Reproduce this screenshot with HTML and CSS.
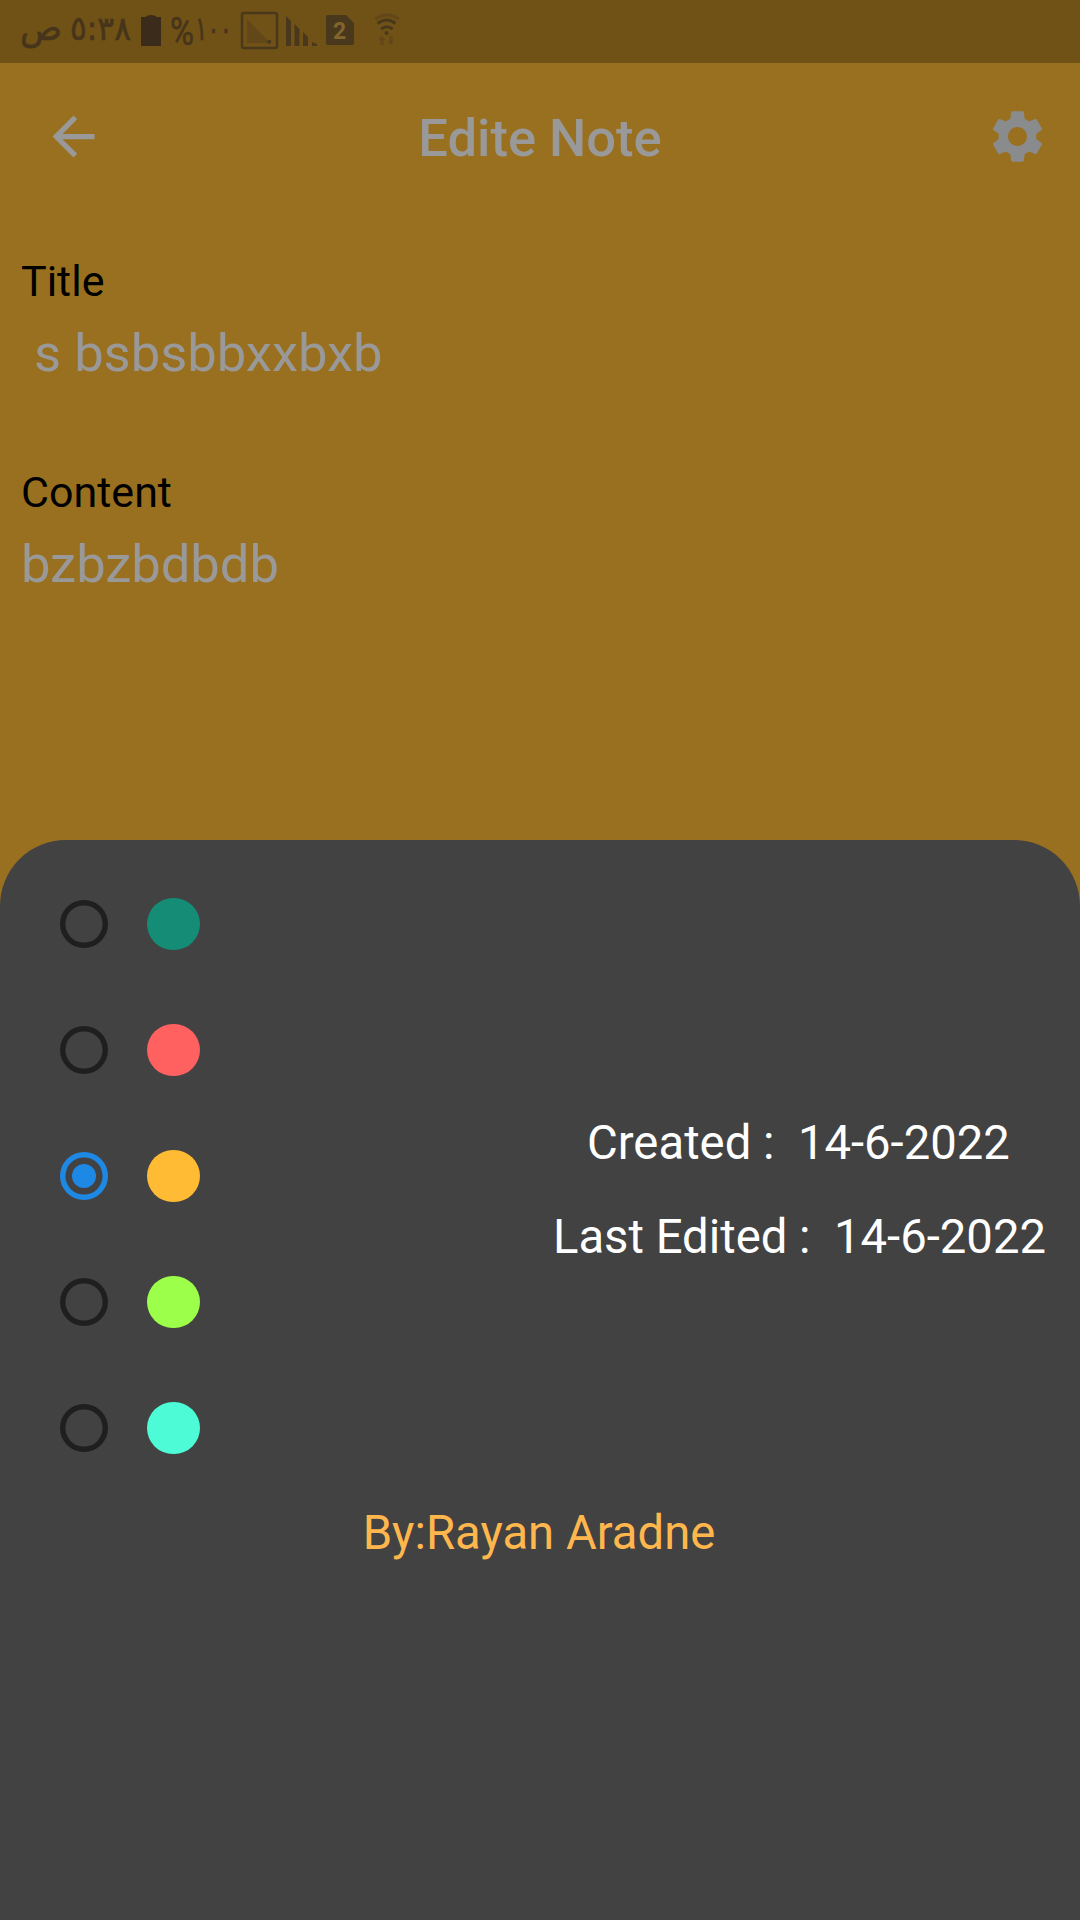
FILE: index.html
```html
<!DOCTYPE html>
<html lang="en">
<head>
<meta charset="utf-8">
<title>Edite Note</title>
<link rel="stylesheet" href="styles.css">
</head>
<body>
<div class="screen">
  <header class="status">
    <svg class="status-icons" viewBox="0 0 420 63" width="420" height="63">
      <g class="status-text">
        <text x="20" y="40" font-size="35" textLength="42" lengthAdjust="spacingAndGlyphs">ص</text>
        <text x="70" y="40" font-size="33" textLength="61" lengthAdjust="spacingAndGlyphs">٥:٣٨</text>
        <text class="percent" x="170" y="45" font-size="38" textLength="24" lengthAdjust="spacingAndGlyphs">%</text>
        <text x="195" y="40" font-size="33" textLength="37" lengthAdjust="spacingAndGlyphs">١٠٠</text>
      </g>
      <path class="battery" d="M141 17h4q6-4 12 0h4v29h-20z"/>
      <rect class="frame" x="242" y="13" width="35" height="35" rx="2"/>
      <path class="faint" d="M247 19l23 24h-23z"/>
      <rect class="ink" x="267.500" y="40" width="3.500" height="3.500"/>
      <path class="ink" d="M286 16l5 5v25h-5zM294.500 24l5 5v17h-5zM303 32l5 5v9h-5zM312 42l5 2v2h-5z"/>
      <path class="ink" d="M328 15h18l8 8v20q0 2-2 2h-24q-2 0-2-2v-26q0-2 2-2z"/>
      <text class="sim" x="333" y="39" font-size="23">2</text>
      <path class="wave faint-wave" d="M375 19q12-8 24 0"/>
      <path class="wave" d="M377.500 23.500q9.500-7 18 0M381 29q6-4.500 11.500 0"/>
      <circle class="ink" cx="386.500" cy="33" r="2"/>
      <path class="faint" d="M382 36l3.500 4h-2v5h-3v-5h-2zM391 45l-3.500-4h2v-5h3v5h2z"/>
    </svg>
  </header>
  <nav class="appbar">
    <svg class="back" viewBox="0 0 24 24"><path d="M20 11H7.830l5.590-5.590L12 4l-8 8 8 8 1.410-1.410L7.830 13H20v-2z"/></svg>
    <h1 class="heading">Edite Note</h1>
    <svg class="gear" viewBox="0 0 24 24"><path d="M19.140 12.940c.040-.3.060-.61.060-.94 0-.32-.02-.64-.07-.94l2.030-1.580c.18-.14.230-.41.120-.61l-1.920-3.320c-.12-.22-.37-.29-.59-.22l-2.390.96c-.5-.38-1.030-.7-1.620-.94l-.36-2.540c-.04-.24-.24-.41-.48-.41h-3.840c-.24 0-.43.170-.47.410l-.36 2.540c-.59.240-1.130.570-1.620.940l-2.390-.96c-.22-.08-.47 0-.59.220L2.740 8.870c-.12.210-.08.470.120.610l2.030 1.580c-.05.3-.09.630-.09.940s.020.640.070.940l-2.030 1.580c-.18.140-.23.410-.12.610l1.920 3.320c.120.220.370.290.590.220l2.390-.96c.5.380 1.030.7 1.620.940l.36 2.540c.05.240.240.410.480.410h3.840c.24 0 .44-.17.470-.41l.36-2.540c.59-.24 1.130-.56 1.620-.94l2.390.96c.22.080.470 0 .59-.22l1.920-3.320c.12-.22.070-.47-.12-.61l-2.010-1.580zM12 15.600c-1.980 0-3.600-1.620-3.600-3.600s1.620-3.600 3.600-3.600 3.600 1.620 3.600 3.600-1.620 3.600-3.600 3.600z"/></svg>
  </nav>
  <main class="note">
    <section class="field">
      <h2 class="label">Title</h2>
      <p class="value"> s bsbsbbxxbxb</p>
    </section>
    <section class="field">
      <h2 class="label">Content</h2>
      <p class="value">bzbzbdbdb</p>
    </section>
  </main>
  <section class="sheet">
    <div class="options">
      <ul class="colors">
        <li class="choice"><span class="radio"></span><span class="swatch green"></span></li>
        <li class="choice"><span class="radio"></span><span class="swatch red"></span></li>
        <li class="choice"><span class="radio selected"></span><span class="swatch amber"></span></li>
        <li class="choice"><span class="radio"></span><span class="swatch lime"></span></li>
        <li class="choice"><span class="radio"></span><span class="swatch aqua"></span></li>
      </ul>
      <div class="dates">
        <p class="created">Created :  14-6-2022</p>
        <p>Last Edited :  14-6-2022</p>
      </div>
    </div>
    <p class="author">By:Rayan Aradne</p>
  </section>
</div>
</body>
</html>
```
FILE: styles.css
```css
* { box-sizing: border-box; margin: 0; padding: 0; }
body { font-family: Roboto, "DejaVu Sans", sans-serif; }
.screen { width: 1080px; height: 1920px; display: flex; flex-direction: column; background: #99701f; overflow: hidden; }
.status { height: 63px; flex: none; background: #705116; }
.status-icons { display: block; }
.status-text { font-family: "DejaVu Sans", sans-serif; fill: #46351b; stroke: #46351b; stroke-width: 0.6; }
.percent { font-family: Roboto, sans-serif; }
.battery { fill: #3b2b1a; }
.ink { fill: #4a381d; }
.frame { fill: none; stroke: #4a381d; stroke-width: 2.5; }
.faint { fill: #624719; }
.wave { fill: none; stroke: #4a381d; stroke-width: 3; }
.faint-wave { stroke: #624719; }
.sim { font-family: Roboto, sans-serif; font-weight: 700; fill: #82652c; }
.appbar { height: 147px; flex: none; padding: 0 31px 0 42px; display: grid; grid-template-columns: 63px 1fr 63px; align-items: center; }
.back { width: 63px; height: 63px; fill: #999; }
.gear { width: 63px; height: 63px; fill: #8a8b8d; }
.heading { font-size: 52.5px; line-height: 62px; font-weight: 500; color: #999; padding: 3px 11px 0 0; text-align: center; }
.note { height: 630px; flex: none; padding: 47px 21px 0; display: flex; flex-direction: column; gap: 84px; }
.field { display: flex; flex-direction: column; gap: 16px; }
.label { font-size: 43px; line-height: 49px; font-weight: 400; color: #000; }
.value { font-size: 52.5px; line-height: 62px; color: #999; white-space: pre; }
.sheet { flex: 1; background: #424242; border-radius: 66px 66px 0 0; padding-top: 21px; }
.options { display: flex; justify-content: space-between; align-items: center; padding: 0 34px 0 60px; }
.colors { list-style: none; }
.choice { height: 126px; display: flex; align-items: center; gap: 39px; }
.radio { width: 48px; height: 48px; box-shadow: inset 0 0 0 5.4px #1f1f1f; border-radius: 50%; display: grid; place-items: center; }
.selected { box-shadow: inset 0 0 0 5.4px #1e88e5; }
.selected::after { content: ""; width: 24px; height: 24px; border-radius: 50%; background: #1e88e5; }
.swatch { width: 52.5px; height: 52.5px; border-radius: 50%; }
.green { background: #158c76; }
.red { background: #ff6161; }
.amber { background: #ffbb33; }
.lime { background: #9cff4a; }
.aqua { background: #4dfcd7; }
.dates { display: flex; flex-direction: column; align-items: center; gap: 38px; padding-top: 28px; font-size: 47.25px; line-height: 56px; color: #fff; white-space: pre; }
.created { padding-right: 2px; }
.author { margin-top: 14px; padding-right: 2px; text-align: center; font-size: 47.25px; line-height: 56px; color: #ffb74d; }
```
